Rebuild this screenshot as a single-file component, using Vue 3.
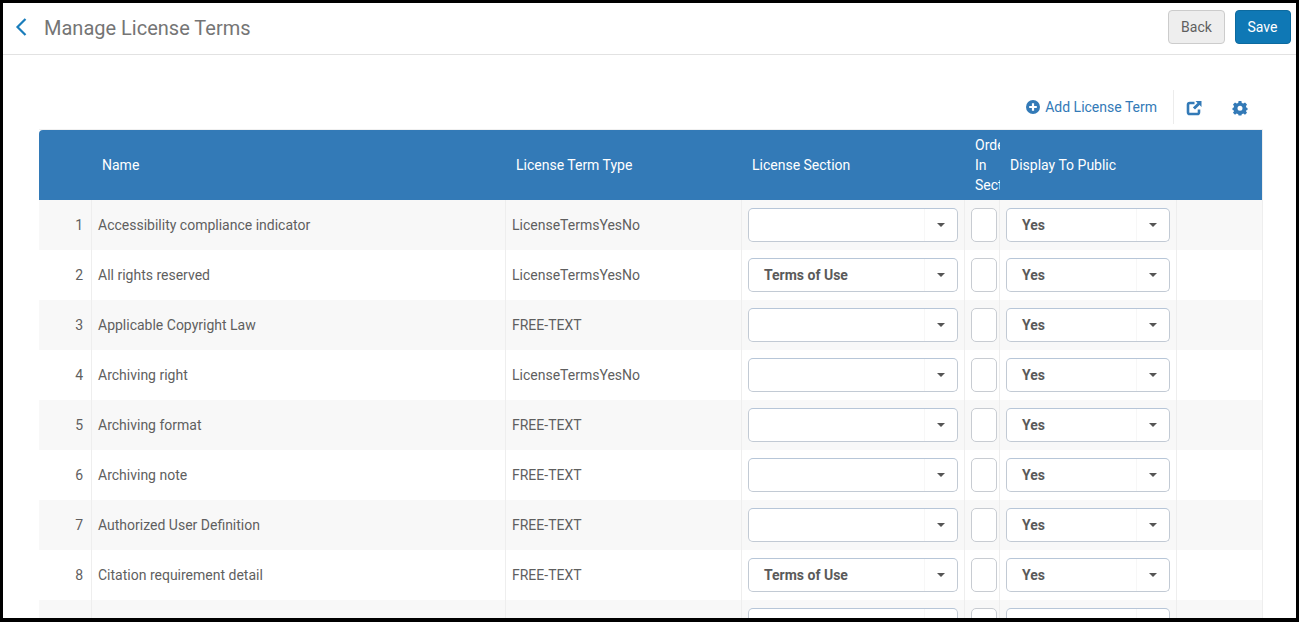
<script setup>
const rows = [
  { n: 1, name: 'Accessibility compliance indicator', type: 'LicenseTermsYesNo', section: '' },
  { n: 2, name: 'All rights reserved', type: 'LicenseTermsYesNo', section: 'Terms of Use' },
  { n: 3, name: 'Applicable Copyright Law', type: 'FREE-TEXT', section: '' },
  { n: 4, name: 'Archiving right', type: 'LicenseTermsYesNo', section: '' },
  { n: 5, name: 'Archiving format', type: 'FREE-TEXT', section: '' },
  { n: 6, name: 'Archiving note', type: 'FREE-TEXT', section: '' },
  { n: 7, name: 'Authorized User Definition', type: 'FREE-TEXT', section: '' },
  { n: 8, name: 'Citation requirement detail', type: 'FREE-TEXT', section: 'Terms of Use' },
  { n: '', name: '', type: '', section: '' },
]
</script>

<template>
  <div class="frame">
    <header class="topbar">
      <div class="title-group">
        <svg class="back-icon" width="14" height="20" viewBox="0 0 14 20">
          <path d="M11.5 2 L3.5 10 L11.5 18" fill="none" stroke="#1a7dbb" stroke-width="2.2" />
        </svg>
        <h1 class="title">Manage License Terms</h1>
      </div>
      <div class="actions">
        <button class="btn btn-back">Back</button>
        <button class="btn btn-save">Save</button>
      </div>
    </header>

    <main class="content">
      <div class="toolbar">
        <a class="add-link">
          <svg width="14" height="14" viewBox="0 0 14 14">
            <circle cx="7" cy="7" r="7" fill="#337ab7" />
            <path d="M7 3.2 V10.8 M3.2 7 H10.8" stroke="#fff" stroke-width="2.2" />
          </svg>
          <span>Add License Term</span>
        </a>
        <div class="tool-icons">
          <svg width="16" height="16" viewBox="0 0 16 16">
            <path d="M8.5 3 H3.8 A1.8 1.8 0 0 0 2 4.8 V12.2 A1.8 1.8 0 0 0 3.8 14 H11.2 A1.8 1.8 0 0 0 13 12.2 V9.5" fill="none" stroke="#337ab7" stroke-width="2.6" />
            <path d="M9.5 1 H15.5 V7 L13.6 5 L9 9.6 L6.9 7.5 L11.5 2.9 Z" fill="#337ab7" />
          </svg>
          <svg width="16" height="16" viewBox="0 0 16 16">
            <path fill="#337ab7" fill-rule="evenodd" d="M6.6 1 H9.4 L9.8 3 L11.3 3.6 L13 2.5 L15 4.5 L13.9 6.2 L14.5 7.7 L15.5 8 V9.9 L14.5 10.3 L13.9 11 L15 12.7 L13 14.7 L11.3 13.6 L9.8 14.2 L9.4 15.5 H6.6 L6.2 14.2 L4.7 13.6 L3 14.7 L1 12.7 L2.1 11 L1.5 10.3 L0.5 9.9 V8 L1.5 7.7 L2.1 6.2 L1 4.5 L3 2.5 L4.7 3.6 L6.2 3 Z M8 5.8 A2.5 2.5 0 1 0 8 10.8 A2.5 2.5 0 1 0 8 5.8 Z" />
          </svg>
        </div>
      </div>

      <div class="table">
        <div class="row head">
          <div class="hcell"></div>
          <div class="hcell"><span>Name</span></div>
          <div class="hcell"><span>License Term Type</span></div>
          <div class="hcell"><span>License Section</span></div>
          <div class="hcell order"><span>Order In Section</span></div>
          <div class="hcell"><span>Display To Public</span></div>
          <div class="hcell"></div>
        </div>
        <div v-for="(r, i) in rows" :key="i" class="row body" :class="{ odd: i % 2 === 0 }">
          <div class="cell num">{{ r.n }}</div>
          <div class="cell">{{ r.name }}</div>
          <div class="cell">{{ r.type }}</div>
          <div class="cell">
            <div class="select">
              <span class="select-value">{{ r.section }}</span>
              <span class="select-arrow"><i class="caret"></i></span>
            </div>
          </div>
          <div class="cell"><div class="order-input"></div></div>
          <div class="cell">
            <div class="select">
              <span class="select-value">Yes</span>
              <span class="select-arrow"><i class="caret"></i></span>
            </div>
          </div>
          <div class="cell last"></div>
        </div>
      </div>
    </main>
  </div>
</template>

<style>
html, body { margin: 0; padding: 0; background: #fff; overflow: hidden; }
</style>

<style scoped>
.frame {
  box-sizing: border-box;
  width: 1299px;
  height: 622px;
  border: solid #000;
  border-width: 3px 3px 4px 3px;
  overflow: hidden;
  background: #fff;
  font-family: Roboto, "Liberation Sans", sans-serif;
  font-size: 14px;
  color: #5f5f5f;
}
.topbar {
  box-sizing: border-box;
  height: 52px;
  border-bottom: 1px solid #e2e2e2;
  display: flex;
  align-items: flex-start;
  justify-content: space-between;
  padding: 7px 5px 0 11px;
}
.title-group { display: flex; align-items: center; height: 35px; gap: 16px; }
.back-icon { margin-top: -1px; }
.title { margin: 0; font-size: 20px; font-weight: 400; color: #757575; line-height: 24px; }
.actions { display: flex; gap: 10px; }
.btn {
  box-sizing: border-box;
  height: 34px;
  border-radius: 4px;
  font-family: inherit;
  font-size: 14px;
  padding: 0;
}
.btn-back { width: 57px; background: #eeeeee; border: 1px solid #cccccc; color: #5f5f5f; }
.btn-save { width: 56px; background: #0f78b5; border: 1px solid #0c6a9f; color: #fff; padding-right: 1px; }

.content { padding: 35px 33px 0 36px; }
.toolbar {
  box-sizing: border-box;
  height: 40px;
  display: flex;
  justify-content: flex-end;
  align-items: flex-start;
  border-bottom: 1px solid #f0f0f0;
}
.add-link {
  display: flex;
  align-items: center;
  gap: 5px;
  height: 34px;
  padding-right: 16px;
  color: #337ab7;
  border-right: 1px solid #ececec;
}
.tool-icons { display: flex; align-items: center; gap: 30px; height: 36px; width: 89px; padding-left: 12px; box-sizing: border-box; }

.table { width: 1224px; border-right: 1px solid #eeeeee; box-sizing: border-box; }
.row {
  display: grid;
  grid-template-columns: 53px 414px 236px 223px 35px 177px 85px;
}
.head {
  background: #337ab7;
  height: 70px;
  color: #fff;
  border-top-left-radius: 4px;
}
.hcell { display: flex; align-items: center; padding-left: 10px; min-width: 0; overflow: hidden; line-height: 20px; }
.hcell.order span { display: block; width: 20px; }
.body { height: 50px; background: #fff; }
.body.odd { background: #f8f8f8; }
.cell {
  box-sizing: border-box;
  display: flex;
  align-items: center;
  padding-left: 6px;
  border-right: 1px solid #eeeeee;
  min-width: 0;
}
.cell.num { justify-content: flex-end; padding: 0 8px 0 0; }
.cell.last { border-right: none; }
.select {
  box-sizing: border-box;
  width: calc(100% - 6px);
  height: 34px;
  background: #fff;
  border: 1px solid #c2cad4;
  border-top-color: #b7c6d8;
  border-radius: 5px;
  display: flex;
  align-items: center;
  justify-content: space-between;
}
.select-value { padding-left: 15px; font-weight: 700; color: #5a5a5a; }
.select-arrow {
  width: 32px;
  height: 100%;
  border-left: 1px solid #f7f7f7;
  display: flex;
  align-items: center;
  justify-content: center;
  flex: none;
}
.caret {
  display: block;
  width: 0;
  height: 0;
  border-left: 4px solid transparent;
  border-right: 4px solid transparent;
  border-top: 4px solid #555;
}
.order-input {
  box-sizing: border-box;
  width: 26px;
  height: 34px;
  background: #fff;
  border: 1px solid #c8ccd2;
  border-radius: 5px;
}
</style>
